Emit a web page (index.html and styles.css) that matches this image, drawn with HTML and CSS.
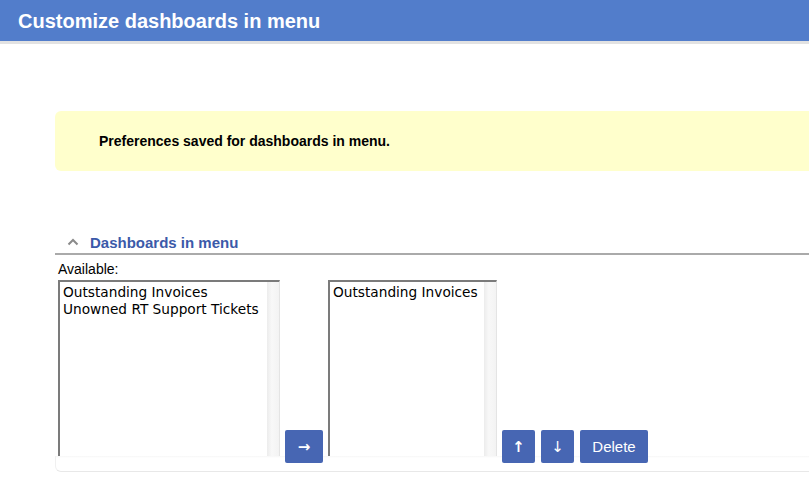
FILE: index.html
```html
<!DOCTYPE html>
<html>
<head>
<meta charset="utf-8">
<link rel="stylesheet" href="styles.css">
</head>
<body>
<div class="header">Customize dashboards in menu</div>
<div class="content">
  <div class="message">Preferences saved for dashboards in menu.</div>
  <div class="section-title">
    <svg class="chev" width="12" height="8" viewBox="0 0 12 8"><path d="M1.5 6.5 L6 2 L10.5 6.5" fill="none" stroke="#8a8a8a" stroke-width="2"/></svg>
    <span>Dashboards in menu</span>
  </div>
  <div class="panel">
    <div class="label">Available:</div>
    <div class="row">
      <div class="listbox lb1">
        <div class="items">
          <div>Outstanding Invoices</div>
          <div>Unowned RT Support Tickets</div>
        </div>
        <div class="track"></div>
      </div>
      <button class="btn arrow">→</button>
      <div class="listbox lb2">
        <div class="items">
          <div>Outstanding Invoices</div>
        </div>
        <div class="track"></div>
      </div>
      <button class="btn sq up">↑</button>
      <button class="btn sq down">↓</button>
      <button class="btn del">Delete</button>
    </div>
    <div class="foot"></div>
  </div>
</div>
</body>
</html>
```
FILE: styles.css
```css
html, body { margin: 0; padding: 0; background: #fff; }
body { font-family: "Liberation Sans", Arial, sans-serif; color: #000; }
.header {
  background: #527dcb;
  color: #fff;
  font-weight: bold;
  font-size: 20px;
  height: 41px;
  line-height: 43px;
  padding-left: 18px;
  border-bottom: 3px solid #e2e2e2;
}
.content { padding-left: 55px; }
.message {
  margin-top: 67px;
  height: 60px;
  background: #ffffcc;
  border-radius: 6px 0 0 6px;
  padding-left: 44px;
  display: flex;
  align-items: center;
  font-weight: bold;
  font-size: 14px;
}
.section-title {
  margin-top: 58px;
  height: 24px;
  border-bottom: 2px solid #aaa;
  display: flex;
  align-items: center;
  padding-left: 12px;
  color: #3b5aa9;
  font-weight: bold;
  font-size: 15px;
}
.section-title span { position: relative; top: 1px; }
.chev { margin-right: 11px; position: relative; top: 1px; }
.panel { padding-left: 3px; }
.label { font-size: 14px; height: 25px; line-height: 29px; }
.row { display: flex; align-items: flex-end; }
.listbox {
  display: flex;
  height: 174px;
  border-top: 2px solid #7b7b7b;
  border-left: 2px solid #7b7b7b;
  border-right: 1px solid #e4e4e4;
  background: #fff;
  font-family: "DejaVu Sans", sans-serif;
  font-size: 13.7px;
  line-height: 17px;
}
.items { flex: 1; padding: 2px 3px; white-space: nowrap; }
.track {
  width: 12px;
  background: linear-gradient(to right, #ececec, #f8f8f8 40%, #f3f3f3);
}
.lb1 { width: 219px; }
.lb2 { width: 166px; margin-left: 5px; }
.btn {
  background: #4766b3;
  color: #fff;
  border: none;
  border-radius: 2px;
  height: 33px;
  margin: 0 0 -7px 0;
  padding: 0;
  font-family: "Liberation Sans", Arial, sans-serif;
  font-size: 15px;
}
.arrow { width: 38px; margin-left: 5px; font-family: "DejaVu Sans", sans-serif; font-size: 15px; font-weight: bold; }
.sq { width: 33px; margin-left: 6px; font-family: "DejaVu Sans", sans-serif; font-size: 15px; }
.up { margin-left: 5px; font-weight: bold; }
.del { width: 68px; margin-left: 6px; }
.foot {
  margin-left: -3px;
  height: 15px;
  border-bottom: 1px solid #e8e8e8;
  border-left: 1px solid #f0f0f0;
  border-bottom-left-radius: 6px;
  background: linear-gradient(#f6f6f6 0, #fff 2px);
}
```
